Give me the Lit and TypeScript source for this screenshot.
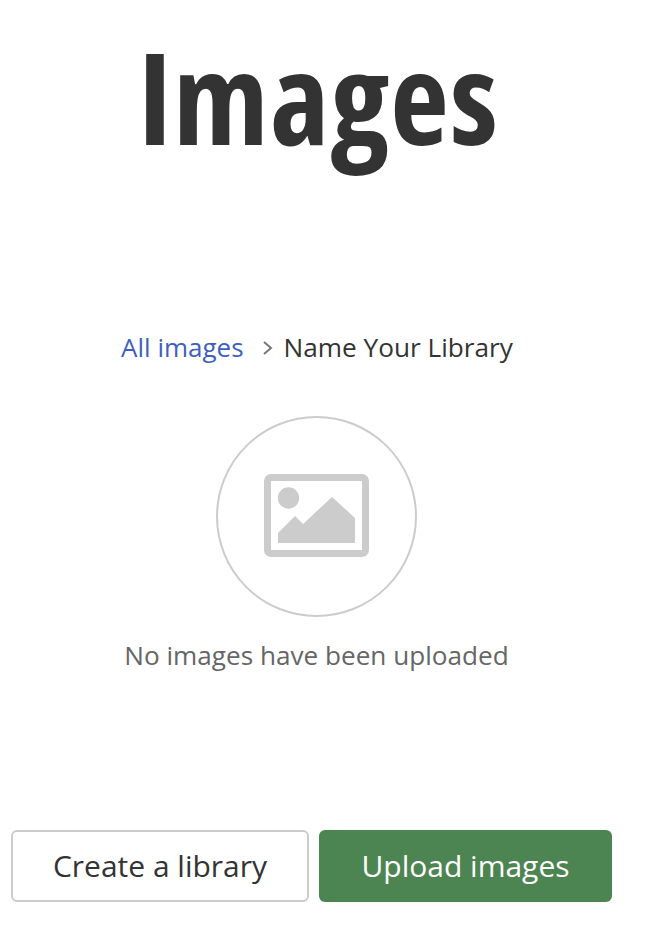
import { LitElement, html, css } from "lit";
import { customElement } from "lit/decorators.js";

@customElement("app-root")
export class AppRoot extends LitElement {
  static styles = css`
    :host { display: block; width: 662px; height: 936px; background: #fff; font-family: "Open Sans", sans-serif; color: #333; overflow: hidden; }
    .page { width: 632px; display: flex; flex-direction: column; align-items: center; }
    h1 { margin: 0; padding: 18px 0 0 5px; font-size: 128px; line-height: 156px; font-weight: 700; font-stretch: 75%; letter-spacing: 1.2px; color: #333; height: 156px; }
    .crumbs { margin-top: 155px; padding-left: 2px; display: flex; align-items: center; font-size: 26.2px; line-height: 36px; height: 36px; }
    .crumbs a { color: #3f5fbf; text-decoration: none; font-size: 26px; }
    .sep { margin: 0 10px 0 18px; display: flex; padding-top: 1px; }
    .circle { margin-top: 51px; box-sizing: border-box; width: 201px; height: 201px; border: 2px solid #ccc; border-radius: 50%; display: flex; align-items: center; justify-content: center; }
    .icon { margin-bottom: 2px; }
    .empty { margin-top: 20px; padding-left: 1px; font-size: 26.15px; line-height: 36px; color: #666; }
    .actions { align-self: flex-start; margin: 157px 0 0 11px; display: flex; gap: 10px; }
    .btn { box-sizing: border-box; height: 72px; border-radius: 6px; font-size: 30px; font-family: inherit; display: flex; align-items: center; justify-content: center; padding: 0 0 2px; }
    .secondary { width: 298px; background: #fff; border: 2px solid #ccc; color: #333; }
    .primary { width: 293px; background: #4c8552; border: 0; color: #fff; }
  `;
  render() {
    return html`<div class="page">
      <h1>Images</h1>
      <nav class="crumbs">
        <a href="#">All images</a>
        <span class="sep"><svg width="12" height="18" viewBox="0 0 12 18"><path d="M2 3l7 6-7 6" fill="none" stroke="#777" stroke-width="2"/></svg></span>
        <span>Name Your Library</span>
      </nav>
      <div class="circle">
        <svg class="icon" width="105" height="83" viewBox="0 0 105 83">
          <path fill-rule="evenodd" fill="#ccc" d="M7 0h91a7 7 0 0 1 7 7v69a7 7 0 0 1-7 7H7a7 7 0 0 1-7-7V7a7 7 0 0 1 7-7zM7 7v69h91V7z"/>
          <circle cx="24.500" cy="24" r="10.700" fill="#ccc"/>
          <path fill="#ccc" d="M14 69V59l17-17 8 8 29-27 23 21v25z"/>
        </svg>
      </div>
      <div class="empty">No images have been uploaded</div>
      <div class="actions">
        <button class="btn secondary">Create a library</button>
        <button class="btn primary">Upload images</button>
      </div>
    </div>`;
  }
}
